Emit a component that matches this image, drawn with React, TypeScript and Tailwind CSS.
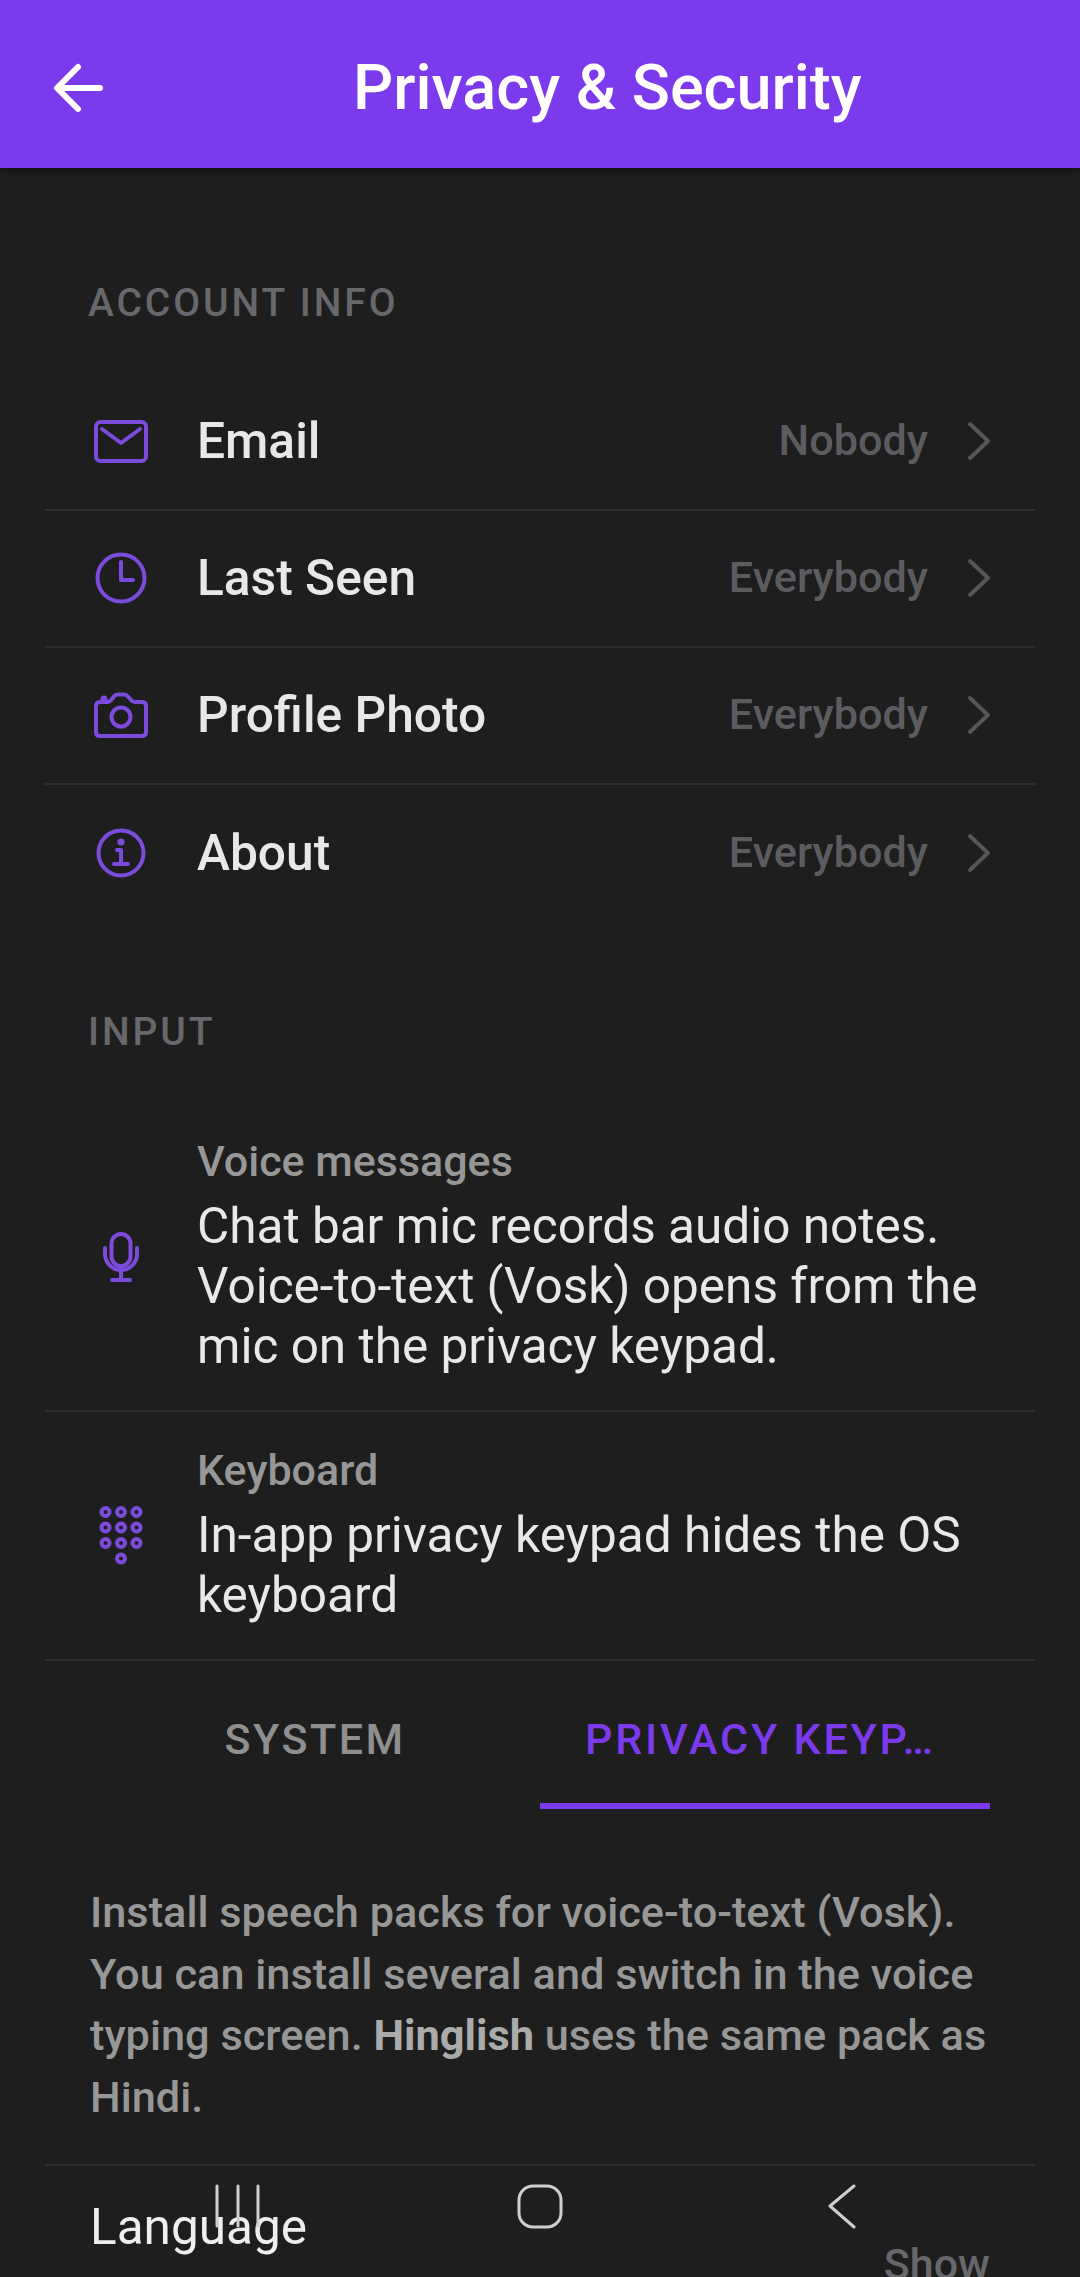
const font = { fontFamily: "Roboto, sans-serif" };

const MailIcon = () => (
  <svg width="60" height="50" viewBox="0 0 60 50" fill="none" stroke="#7c4bdc" strokeWidth="4" strokeLinecap="round" strokeLinejoin="round">
    <rect x="5" y="6" width="50" height="39" rx="4.5" />
    <path d="M 11 13 L 30 27 L 49 13" />
  </svg>
);

const ClockIcon = () => (
  <svg width="60" height="60" viewBox="0 0 60 60" fill="none" stroke="#7c4bdc" strokeWidth="4" strokeLinecap="round" strokeLinejoin="round">
    <circle cx="30" cy="30" r="23.5" />
    <path d="M 30 14 L 30 32 L 42 32" />
  </svg>
);

const CameraIcon = () => (
  <svg width="60" height="50" viewBox="0 0 60 50" fill="none" stroke="#7c4bdc" strokeWidth="4" strokeLinecap="round" strokeLinejoin="round">
    <path d="M 5 16 Q 5 12 9 12 L 16 12 Q 19 12 21 9 L 23 6.5 Q 24.5 4.5 27 4.5 L 33 4.5 Q 35.5 4.5 37 6.5 L 40 10 Q 41.5 12 44 12 L 51 12 Q 55 12 55 16 L 55 42 Q 55 46 51 46 L 9 46 Q 5 46 5 42 Z" />
    <circle cx="30" cy="27" r="9.5" />
    <circle cx="13" cy="9" r="1.5" fill="#7c4bdc" />
  </svg>
);

const InfoIcon = () => (
  <svg width="60" height="60" viewBox="0 0 60 60" fill="none" stroke="#7c4bdc" strokeWidth="4" strokeLinecap="round" strokeLinejoin="round">
    <circle cx="30" cy="30" r="22.5" />
    <circle cx="30" cy="19" r="1.6" fill="#7c4bdc" />
    <path d="M 26 27 L 30 27 L 30 41 M 23 41 L 37 41" />
  </svg>
);

const MicIcon = () => (
  <svg width="60" height="60" viewBox="0 0 60 60" fill="none" stroke="#7c4bdc" strokeWidth="4" strokeLinecap="round" strokeLinejoin="round">
    <rect x="20.5" y="7" width="19" height="32" rx="9.5" />
    <path d="M 14 21 L 14 27 A 16 16 0 0 0 46 27 L 46 21" />
    <path d="M 30 43 L 30 53 M 21 53 L 39 53" />
  </svg>
);

const KeypadIcon = () => (
  <svg width="60" height="70" viewBox="0 0 60 70" fill="none" stroke="#7c4bdc" strokeWidth="4">
    {[11, 26.5, 42].map((y) =>
      [14.5, 30, 45.5].map((x) => <circle key={`${x}-${y}`} cx={x} cy={y} r="4" />)
    )}
    <circle cx="30" cy="57.5" r="4" />
  </svg>
);

const Chevron = () => (
  <svg width="24" height="40" viewBox="0 0 24 40" fill="none" stroke="#56565a" strokeWidth="4" strokeLinecap="round" strokeLinejoin="round">
    <path d="M 3 3 L 21 20 L 3 37" />
  </svg>
);

const accountRows = [
  { label: "Email", value: "Nobody", icon: <MailIcon /> },
  { label: "Last Seen", value: "Everybody", icon: <ClockIcon /> },
  { label: "Profile Photo", value: "Everybody", icon: <CameraIcon /> },
  { label: "About", value: "Everybody", icon: <InfoIcon /> },
];

const SectionLabel = ({ children }: { children: string }) => (
  <h2 className="pl-[43px] text-[39px] leading-[48px] font-medium tracking-[2.9px] text-[#67676c]">{children}</h2>
);

const InputRow = ({ icon, title, body }: { icon: React.ReactNode; title: string; body: string }) => (
  <div className="flex items-center border-b-2 border-[#2e2e2e] py-[34px] pl-[32px]">
    <div className="flex w-[120px] justify-center pr-[32px]">{icon}</div>
    <div className="flex-1 pr-[30px]">
      <p className="text-[43px] leading-[48px] font-medium text-[#979797]">{title}</p>
      <p className="mt-[11px] text-[49.5px] leading-[60px] text-[#e8e8e8]">{body}</p>
    </div>
  </div>
);

export default function App() {
  return (
    <div className="relative h-[2277px] w-[1080px] overflow-hidden bg-[#1e1e1e]" style={font}>
      {/* Header */}
      <header className="relative flex h-[168px] items-center bg-[#7c3aed] shadow-[0_2px_6px_rgba(0,0,0,0.5)]">
        <svg className="mt-[8px] ml-[50px]" width="58" height="52" viewBox="0 0 58 52" fill="none" stroke="#ffffff" strokeWidth="6" strokeLinecap="round" strokeLinejoin="round">
          <path d="M 8 26 L 50 26 M 28 5 L 7 26 L 28 47" />
        </svg>
        <h1 className="mt-[8px] ml-[245px] text-[63px] leading-[68px] font-medium text-white">Privacy &amp; Security</h1>
      </header>

      <main className="px-[45px]">
        {/* Account info */}
        <div className="pt-[111px] pb-[47px]">
          <SectionLabel>ACCOUNT INFO</SectionLabel>
        </div>
        <div>
          {accountRows.map((row, i) => (
            <div
              key={row.label}
              className={`flex h-[137px] items-center pb-[2px] pl-[32px] ${i < accountRows.length - 1 ? "border-b-2 border-[#2e2e2e]" : ""}`}
            >
              <div className="flex w-[120px] justify-center pr-[32px]">{row.icon}</div>
              <span className="flex-1 text-[49.7px] leading-[56px] font-medium text-[#e8e8e8]">{row.label}</span>
              <span className="text-[43.2px] leading-[48px] font-medium text-[#5c5c60]">{row.value}</span>
              <div className="mr-[44px] ml-[39px] flex"><Chevron /></div>
            </div>
          ))}
        </div>

        {/* Input */}
        <div className="pt-[86px] pb-[47px]">
          <SectionLabel>INPUT</SectionLabel>
        </div>
        <InputRow
          icon={<MicIcon />}
          title="Voice messages"
          body="Chat bar mic records audio notes. Voice-to-text (Vosk) opens from the mic on the privacy keypad."
        />
        <InputRow
          icon={<KeypadIcon />}
          title="Keyboard"
          body="In-app privacy keypad hides the OS keyboard"
        />

        {/* Tabs */}
        <div className="mx-[45px] grid h-[148px] grid-cols-2">
          <div className="flex h-full items-center justify-center pt-[8px] text-[43px] font-medium tracking-[2.5px] text-[#8f8f8f]">SYSTEM</div>
          <div className="flex h-full items-center border-b-[6px] border-[#7c3aed] pt-[14px] pl-[45px] text-[43px] font-medium tracking-[2.8px] text-[#7c3aed]">PRIVACY KEYP…</div>
        </div>

        {/* Speech packs */}
        <p className="border-b-2 border-[#2e2e2e] px-[45px] pt-[73px] pb-[36px] text-[43.3px] leading-[61.5px] font-medium text-[#979797]">
          Install speech packs for voice-to-text (Vosk). You can install several and switch in the voice typing screen.{" "}
          <strong className="font-bold text-[#ababab]">Hinglish</strong> uses the same pack as Hindi.
        </p>
        <div className="flex justify-between pt-[34px] pr-[45px] pl-[45px]">
          <span className="text-[49.5px] leading-[55px] text-[#eeeeee]">Language</span>
          <span className="mt-[40px] text-[43px] leading-[48px] font-medium text-[#67676c]">Show</span>
        </div>
      </main>

      {/* Android nav bar */}
      <div className="absolute top-[2183px] left-0 flex w-full justify-center">
        <div className="flex w-[302px] justify-center">
          <svg width="50" height="46" viewBox="0 0 50 46" fill="none" stroke="#cfcfcf" strokeWidth="3" strokeLinecap="round">
            <path d="M 4 3 L 4 43 M 25 3 L 25 43 M 45 3 L 45 43" />
          </svg>
        </div>
        <div className="flex w-[302px] justify-center">
          <svg width="46" height="46" viewBox="0 0 46 46" fill="none" stroke="#cfcfcf" strokeWidth="3">
            <rect x="2" y="3" width="42" height="41" rx="14" />
          </svg>
        </div>
        <div className="flex w-[302px] justify-center">
          <svg width="30" height="46" viewBox="0 0 30 46" fill="none" stroke="#cfcfcf" strokeWidth="3" strokeLinecap="round" strokeLinejoin="round">
            <path d="M 27 3 L 3 23 L 27 44" />
          </svg>
        </div>
      </div>
    </div>
  );
}
